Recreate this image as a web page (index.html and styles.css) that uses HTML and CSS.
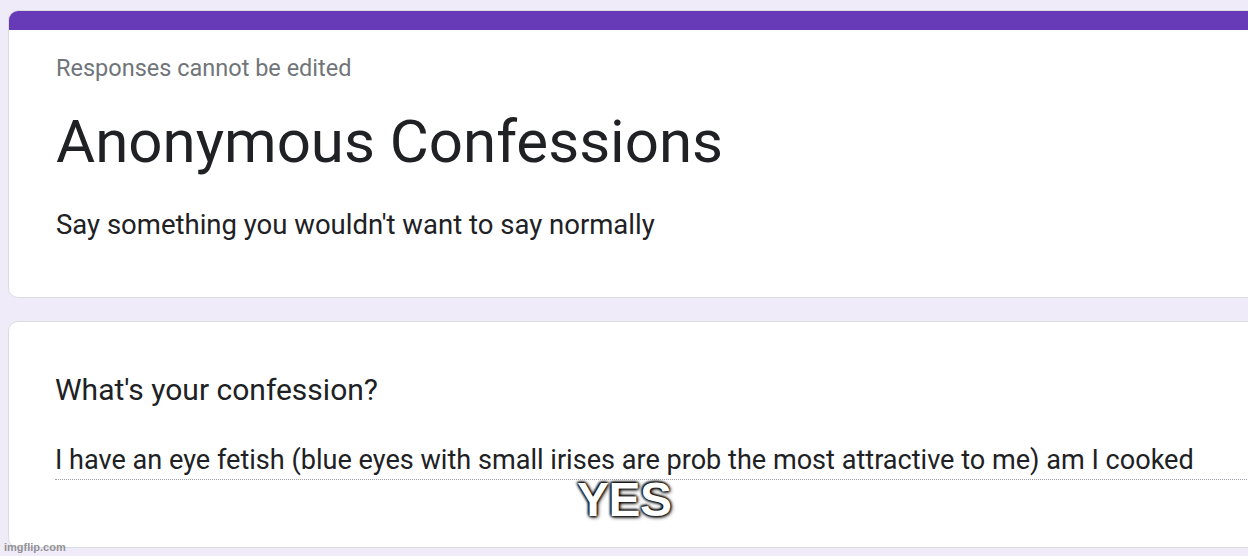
FILE: index.html
```html
<!DOCTYPE html>
<html lang="en">
<head>
    <meta charset="UTF-8">
    <meta name="viewport" content="width=device-width, initial-scale=1.0">
    <title>Anonymous Confessions</title>
    <link rel="stylesheet" href="styles.css">
</head>
<body>
    <div class="form">
        <div class="card header-card">
            <div class="accent"></div>
            <div class="card-body">
                <p class="notice">Responses cannot be edited</p>
                <h1>Anonymous Confessions</h1>
                <p class="description">Say something you wouldn't want to say normally</p>
            </div>
        </div>

        <div class="card question-card">
            <div class="card-body">
                <h2>What's your confession?</h2>
                <div class="answer">I have an eye fetish (blue eyes with small irises are prob the most attractive to me) am I cooked</div>
                <div class="caption">YES</div>
            </div>
        </div>
    </div>

    <span class="watermark">imgflip.com</span>
</body>
</html>
```

FILE: styles.css
```css
* {
    margin: 0;
    padding: 0;
    box-sizing: border-box;
}
html, body {
    height: 100%;
    overflow: hidden;
}
body {
    background-color: #efebf8;
    font-family: Roboto, 'Noto Sans', sans-serif;
    color: #202124;
    padding: 10px 0 0 8px;
    position: relative;
}
.form {
    display: flex;
    flex-direction: column;
    gap: 23px;
    width: 1270px;
}
.card {
    background-color: white;
    border: 1px solid #dadce0;
    border-radius: 10px;
    overflow: hidden;
}
.accent {
    height: 19px;
    background-color: #673ab7;
}
.header-card .card-body {
    height: 267px;
    padding: 24px 0 0 47px;
}
.notice {
    font-size: 23.5px;
    color: #70757a;
    line-height: 28px;
}
h1 {
    font-size: 60px;
    font-weight: 400;
    line-height: 72px;
    margin-top: 24px;
}
.description {
    font-size: 27.5px;
    line-height: 32px;
    margin-top: 31px;
}
.question-card .card-body {
    height: 225px;
    padding: 51px 0 0 46px;
    position: relative;
}
h2 {
    font-size: 30px;
    font-weight: 400;
    line-height: 34px;
}
.answer {
    font-size: 27.1px;
    line-height: 32px;
    margin-top: 37px;
    padding-bottom: 3px;
    border-bottom: 1px dotted #9aa0a6;
}
.caption {
    position: absolute;
    left: 568px;
    top: 150px;
    font-family: 'Liberation Sans', Arial, sans-serif;
    font-weight: bold;
    font-size: 48px;
    letter-spacing: -0.5px;
    color: white;
    text-shadow: 0 0 3px #000, 0 0 3px #000, 1px 1px 4px #000, -1px -1px 3px #000;
}
.watermark {
    position: absolute;
    left: 4px;
    bottom: 3px;
    font-family: 'Liberation Sans', Arial, sans-serif;
    font-weight: bold;
    font-size: 11px;
    color: rgba(120, 120, 120, 0.8);
}
```
